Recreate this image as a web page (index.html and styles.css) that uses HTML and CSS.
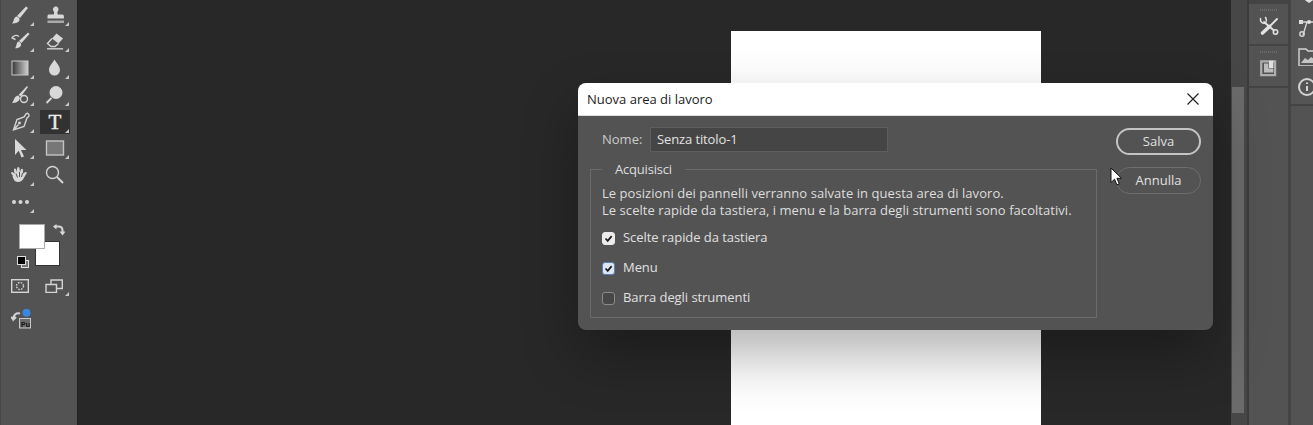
FILE: index.html
```html
<!DOCTYPE html>
<html lang="it">
<head>
<meta charset="utf-8">
<title>Nuova area di lavoro</title>
<link rel="stylesheet" href="styles.css">
</head>
<body>
<div class="app">
  <aside class="toolbar">
    <div class="tools">
      <div class="tool fly"><svg viewBox="0 0 24 24"><path d="M18 3.500 20 5 12 15 9 13Z"/><path d="M8.500 13.500c2.800.6 3.800 3 2.500 4.800-1.700 2-4.500 2.300-7 2.200 2.200-1.600 1.300-6 4.500-7Z"/></svg></div>
      <div class="tool fly"><svg viewBox="0 0 24 24"><path d="M12.500 3.500c2.800 0 3.800 2.800 2.400 4.700-.8 1-.7 2.300 0 3.300h4.300c1 0 1.700.8 1.700 1.700v2.300H4.500v-2.300c0-1 .7-1.700 1.700-1.700h4.400c.7-1 .8-2.300 0-3.300-1.400-1.900-.4-4.700 2.400-4.700Z"/><path d="M4.500 17.500h16.500v2.500H4.500Z" opacity=".65"/></svg></div>
      <div class="tool fly"><svg viewBox="0 0 24 24"><path d="M20 3.500 21.500 5 13.500 14 11 12Z"/><path d="M10.500 12.500c2.300.6 3.300 2.800 2.200 4.500-1.300 2-3.800 2.400-5.700 2.300 1.800-1.500 1-5.800 3.500-6.800Z"/><path class="ln" d="M11 7.500C8.500 5.500 5 6.500 4 9l3.500 1.500"/></svg></div>
      <div class="tool fly"><svg viewBox="0 0 24 24"><path d="M13.500 4.500 20 9.500 15.500 14.500 9 9.500Z"/><path class="ln" d="M9 9.500 4.500 14.500 8 17.500H12L15.500 14.500"/><path class="ln" d="M4 19.800h16"/></svg></div>
      <div class="tool fly"><svg viewBox="0 0 24 24"><defs><linearGradient id="gr"><stop offset="0" stop-color="#383838"/><stop offset="1" stop-color="#cfcfcf"/></linearGradient></defs><rect x="4" y="5" width="16" height="14" fill="url(#gr)" stroke="#c9c9c9"/></svg></div>
      <div class="tool fly"><svg viewBox="0 0 24 24"><path d="M11.500 3.500c1.800 3.600 5.500 6.500 5.500 10.500a5.500 5.500 0 0 1-11 0c0-4 3.700-6.900 5.500-10.500Z"/></svg></div>
      <div class="tool fly"><svg viewBox="0 0 24 24"><path d="M19 3 20 4 13 13.500 10.500 12Z"/><path d="M10 12.500c1.500.7 2 2 1.600 3.500-.6 2.500-3.800 4-7.600 4 2-2 1.800-6.500 6-7.500Z"/><circle class="ln" cx="16" cy="16" r="3.500"/></svg></div>
      <div class="tool fly"><svg viewBox="0 0 24 24"><circle cx="13" cy="9.500" r="6.500"/><path class="ln2" d="M8.500 15 3.500 20"/></svg></div>
      <div class="tool fly"><svg viewBox="0 0 24 24"><path class="ln" d="M20 3.500c2 2 1 3-1 4.500l-3 8.500-10.500 3.500L9 9.500l7-2.500c1.200-1.500 2.500-5 4-3.500ZM5.500 20l5-5.500"/><circle cx="11.500" cy="13" r="1.400"/></svg></div>
      <div class="tool fly active"><span class="type-t">T</span></div>
      <div class="tool fly"><svg viewBox="0 0 24 24"><path d="M7 3 18.500 14H13l3 6.500-2.500 1-2.700-6.700L7 19Z"/></svg></div>
      <div class="tool fly"><svg viewBox="0 0 24 24"><rect x="3.500" y="5" width="17" height="14" fill="#777" stroke="#c4c4c4" stroke-width="1.400"/></svg></div>
      <div class="tool fly"><svg viewBox="0 0 24 24"><path d="M5 13c-1.500-2-2.500-3.500-1.300-4 1.200-.4 2 .8 3 2-.7-2.600-1.300-5 0-5.400 1.200-.3 1.700 1.600 2.400 3.800-.2-2.600-.2-5.500 1.200-5.500 1.400 0 1.500 3 1.700 5.500.4-2 .9-4 2.200-3.700 1.300.3.900 2.800.6 5.300 1-1.200 2.500-2.600 3.600-1.900 1 .7-1.100 3-2.300 5.400-1.300 2.800-3 4.500-6.300 4.500-3.100 0-4.600-2.800-5.300-6Z"/><path class="dk" d="M8 10.500l1.500 4M11.500 9v5M14.500 10l-1 4"/></svg></div>
      <div class="tool"><svg viewBox="0 0 24 24"><circle class="ln" cx="9.500" cy="9.500" r="6"/><path class="ln2" d="m14 14 6 6"/></svg></div>
      <div class="tool fly"><svg class="dots" viewBox="0 0 24 24"><circle cx="5" cy="12" r="2"/><circle cx="11.500" cy="12" r="2"/><circle cx="18" cy="12" r="2"/></svg></div>
    </div>
    <div class="swatches">
      <div class="swatch-bg"></div>
      <div class="swatch-fg"></div>
      <svg class="swap" viewBox="0 0 12 12"><path class="ln2" d="M2.500 2.500h3c2.500 0 4 1.500 4 4v2"/><path d="M0 2.500 3.500 0v5.500ZM6.500 7.500h6l-3 4Z"/></svg>
      <div class="mini-bg"></div>
      <div class="mini-fg"></div>
    </div>
    <div class="mode-row">
      <svg class="mode-icon" viewBox="0 0 18 14"><rect class="ln" x=".7" y=".7" width="16.600" height="12.600"/><circle class="dash" cx="9" cy="7" r="3.500"/></svg>
      <svg class="mode-icon" viewBox="0 0 18 14"><path class="ln" d="M1 5.500h10.500v8H1ZM6 5V1h11.300v8.500H12"/></svg>
      <span class="mode-fly"></span>
    </div>
    <div class="share">
      <svg viewBox="0 0 20 20"><path class="ln2" d="M9 4.500C5 3.500 2 6 2.500 10.500l2.500-2.500M2.500 10.500 0 8"/><rect x="8.500" y="9.500" width="11" height="9.500" fill="#6a6a6a" stroke="#c9c9c9"/><text x="10" y="17.500" class="share-txt">Pu</text><circle cx="15.500" cy="3.800" r="4" fill="#3b86e0"/></svg>
    </div>
  </aside>

  <main class="workspace">
    <div class="doc"></div>
  </main>

  <div class="scroll"><div class="thumb"></div></div>

  <div class="dock">
    <div class="dock-item">
      <span class="grip"></span>
      <svg viewBox="0 0 20 20"><path class="tool-bar" d="M5 6l10 8.500"/><path class="tool-thin" d="M1.500 2.500c-.5 3 1.700 5.200 4.500 4.700 1.500-1 1.800-3.500.5-5.700"/><circle class="tool-thin" cx="16.500" cy="16" r="2.200"/><path class="tool-fat" d="M3.500 17 10.500 10.500"/><path class="tool-bar" d="M10.500 10.500 18 3"/></svg>
    </div>
    <div class="dock-item">
      <span class="grip"></span>
      <svg viewBox="0 0 18 18"><path class="ln2" d="M2 3h12.500v12.500H2Z" opacity=".7"/><path d="M4.500 5h4v4.500h4.500v3.500h-8.500Z" opacity=".75"/><path d="M9 2.500h4v6.500h-4Z"/></svg>
    </div>
    <div class="dock-rest"></div>
  </div>

  <div class="dock dock-side">
    <div class="side-top">
      <svg class="side-icon s1" viewBox="0 0 22 10"><path d="M4 0l7 5 7-5Z"/></svg>
      <svg class="side-icon s2" viewBox="0 0 22 18"><rect x="1" y="1" width="4" height="4"/><path class="ln" d="M3 3h20M5 16 9 3"/><circle cx="11" cy="3" r="2"/><circle class="ln" cx="4" cy="15" r="2.200"/></svg>
      <svg class="side-icon s3" viewBox="0 0 22 18"><path class="ln" d="M1 1h7l2 2h12v15H1Z"/><path d="M3 15l4-5 3 2 3-3 9 6Z" opacity=".8"/></svg>
      <svg class="side-icon s4" viewBox="0 0 22 18"><circle class="ln2" cx="9" cy="9" r="8"/><path class="ln2" d="M9 8v5M9 4.500v1.500"/></svg>
    </div>
    <div class="dock-rest"></div>
  </div>
</div>

<section class="dialog">
  <header class="dialog-title">
    <h1>Nuova area di lavoro</h1>
    <svg class="close" viewBox="0 0 12 12"><path d="M.5.500l11 11M11.500.5l-11 11"/></svg>
  </header>
  <div class="dialog-body">
    <div class="dialog-main">
      <div class="name-row">
        <label class="name-label" for="nome">Nome:</label>
        <div class="name-input" id="nome">Senza titolo-1</div>
      </div>
      <fieldset class="capture">
        <legend>Acquisisci</legend>
        <p>Le posizioni dei pannelli verranno salvate in questa area di lavoro.<br>Le scelte rapide da tastiera, i menu e la barra degli strumenti sono facoltativi.</p>
        <div class="check-row first">
          <span class="box on"><svg viewBox="0 0 14 14"><path d="M3.200 7 6 10l5-6"/></svg></span>
          <span class="check-label">Scelte rapide da tastiera</span>
        </div>
        <div class="check-row">
          <span class="box on focus"><svg viewBox="0 0 14 14"><path d="M3.200 7 6 10l5-6"/></svg></span>
          <span class="check-label">Menu</span>
        </div>
        <div class="check-row">
          <span class="box"></span>
          <span class="check-label">Barra degli strumenti</span>
        </div>
      </fieldset>
    </div>
    <div class="dialog-actions">
      <div class="btn primary">Salva</div>
      <div class="btn">Annulla</div>
    </div>
  </div>
  <svg class="cursor" viewBox="0 0 12 19"><path d="M1 1v14.500l3.500-3.300 2.400 5.600 2.400-1-2.400-5.500H11.500Z"/></svg>
</section>
</body>
</html>
```

FILE: styles.css
```css
* { box-sizing: border-box; }
html, body { margin: 0; height: 100%; overflow: hidden; }
body { background: #282828; font-family: "Open Sans", "Noto Sans", "Liberation Sans", sans-serif; font-size: 13px; }

.app { display: flex; height: 425px; }

.ln, .ln2, .dash { fill: none; stroke: #d4d4d4; }
.ln { stroke-width: 1.400; }
.ln2 { stroke-width: 2; }
.dash { stroke-width: 1.400; stroke-dasharray: 1.500 1.300; }
.dk { fill: none; stroke: #535353; stroke-width: 1; }

/* Left tools */
.toolbar { width: 78px; flex: none; background: #535353; border-left: 1px solid #474747; border-right: 1px solid #222; padding: 2.500px 0 0 4px; color: #d8d8d8; }
.toolbar svg, .dock svg { filter: blur(.3px); }
.tools { display: grid; grid-template-columns: 30px 30px; column-gap: 5px; grid-auto-rows: 24px; row-gap: 2.800px; }
.tool { position: relative; display: flex; align-items: center; justify-content: center; }
.tool svg { width: 24px; height: 24px; fill: #d8d8d8; }
.tool svg.dots { margin-left: 1px; }
.tool.fly::after { content: ""; position: absolute; right: 1px; bottom: 1px; border: 2px solid transparent; border-right-color: #c8c8c8; border-bottom-color: #c8c8c8; }
.tool.active { background: #323232; }
.type-t { font-family: "Liberation Serif", serif; font-size: 21px; line-height: 24px; color: #ededed; -webkit-text-stroke: .4px #ededed; }

.swatches { position: relative; width: 60px; height: 45px; margin: 10px 0 0 9px; }
.swatch-fg, .swatch-bg { position: absolute; background: #fff; }
.swatch-fg { left: 5px; top: 0; width: 26px; height: 25px; border: 1px solid #aaa; }
.swatch-bg { left: 21px; top: 17px; width: 25px; height: 25px; border: 1px solid #333; }
.swap { position: absolute; left: 39px; top: 0; width: 12px; height: 12px; fill: #d8d8d8; }
.mini-fg { position: absolute; left: 3px; top: 32px; width: 9px; height: 9px; background: #000; border: 1px solid #ddd; }
.mini-bg { position: absolute; left: 7px; top: 36px; width: 8px; height: 8px; background: #777; border: 1px solid #ddd; }

.mode-row { position: relative; display: flex; gap: 16px; margin: 10px 0 0 6px; width: 55px; }
.mode-icon { width: 18px; height: 14px; }
.mode-fly { position: absolute; right: -3px; bottom: -3px; border: 2px solid transparent; border-right-color: #c8c8c8; border-bottom-color: #c8c8c8; }
.share { margin: 16px 0 0 6px; width: 20px; height: 20px; }
.share svg { display: block; width: 20px; height: 20px; fill: #d8d8d8; }
.share-txt { font-family: "Liberation Sans", sans-serif; font-size: 7px; font-weight: 700; fill: #111; }

/* Canvas */
.workspace { width: 1153px; flex: none; background: #282828; padding: 31px 0 0 653px; }
.doc { width: 310px; height: 394px; background: #fff; }

/* Scrollbar and docks */
.scroll { width: 18px; flex: none; background: #474747; padding: 87px 3px 12px 1px; border-right: 2px solid #3c3c3c; }
.thumb { height: 326px; background: #6b6b6b; }

.dock { width: 42px; flex: none; display: flex; flex-direction: column; background: #444; padding-right: 3px; color: #ddd; }
.dock svg { fill: #e0e0e0; }
.dock-item { position: relative; height: 41px; margin-bottom: 1px; background: #535353; border-bottom: 1px solid #444; display: flex; align-items: center; justify-content: center; }
.dock-item:first-child { margin-top: 4px; }
.dock-item svg { width: 20px; height: 20px; margin-top: 4px; }
.tool-bar, .tool-thin, .tool-fat { fill: none; stroke: #e2e2e2; stroke-linecap: round; }
.tool-bar { stroke-width: 1.900; }
.tool-thin { stroke-width: 1.500; }
.tool-fat { stroke-width: 3.600; }
.grip { position: absolute; top: 5px; left: 11px; width: 17px; height: 2px; background: repeating-linear-gradient(90deg, #6a6a6a 0 1px, transparent 1px 2px); }
.dock-rest { flex: 1; background: #535353; }

.dock-side { width: 22px; padding-right: 0; }
.side-top { position: relative; height: 104px; background: #555; margin-bottom: 2px; overflow: hidden; }
.side-icon { position: absolute; left: 7px; width: 22px; }
.s1 { top: -2px; height: 10px; }
.s2 { top: 19px; height: 18px; }
.s3 { top: 48px; height: 18px; }
.s4 { top: 78px; height: 18px; }

/* Dialog */
.dialog { position: absolute; left: 578px; top: 83px; width: 635px; height: 247px; border-radius: 8px; background: #535353; box-shadow: 0 25px 55px rgba(0, 0, 0, .3); color: #dcdcdc; }
.dialog-title { height: 33px; display: flex; align-items: center; justify-content: space-between; padding: 0 14px 0 9px; background: #fff; border-radius: 8px 8px 0 0; border-bottom: 1px solid #ddd; }
.dialog-title h1 { margin: 0; font-size: 13px; font-weight: 400; color: #1b1b1b; }
.close { width: 12px; height: 12px; }
.close path { fill: none; stroke: #222; stroke-width: 1.200; }

.dialog-body { display: flex; justify-content: space-between; padding: 11px 12px 12px; }
.dialog-main { width: 507px; }
.name-row { display: flex; align-items: center; gap: 7px; margin-left: 12px; height: 25px; }
.name-label { width: 41px; color: #cccccc; line-height: 23px; }
.name-input { width: 238px; height: 25px; line-height: 22px; padding-left: 6px; background: #454545; border: 1px solid #5e5e5e; color: #e2e2e2; letter-spacing: -.12px; }

.capture { margin: 9px 0 0; height: 157px; padding: 8px 11px 0; border: 1px solid #6b6b6b; min-width: 0; }
.capture legend { margin-left: 0; padding: 0 13px; line-height: 16px; color: #dedede; letter-spacing: -.2px; }
.capture p { margin: 0; line-height: 17px; color: #dedede; letter-spacing: .05px; }
.check-row { display: flex; align-items: center; gap: 8px; height: 16px; margin-top: 14px; color: #e0e0e0; }
.check-row.first { margin-top: 11px; }
.check-label { line-height: 14px; margin-top: -2px; letter-spacing: -.06px; }
.box { width: 13px; height: 13px; flex: none; border: 1px solid #8a8a8a; border-radius: 3px; background: #474747; }
.box.on { background: #ececec; border-color: #ececec; }
.box.focus { background: #dfe6f3; border-color: #5d7fb5; }
.box svg { display: block; width: 11px; height: 11px; }
.box path { fill: none; stroke: #1c1c1c; stroke-width: 2.200; }

.dialog-actions { width: 85px; display: flex; flex-direction: column; gap: 12px; margin-top: 1px; }
.btn { height: 27px; border-radius: 14px; border: 1px solid #6e6e6e; text-align: center; line-height: 25px; color: #e0e0e0; }
.btn.primary { border: 2px solid #c4c4c4; line-height: 23px; }

.cursor { position: absolute; left: 532px; top: 84px; width: 12px; height: 19px; }
.cursor path { fill: #fff; stroke: #111; stroke-width: 1; }
```
